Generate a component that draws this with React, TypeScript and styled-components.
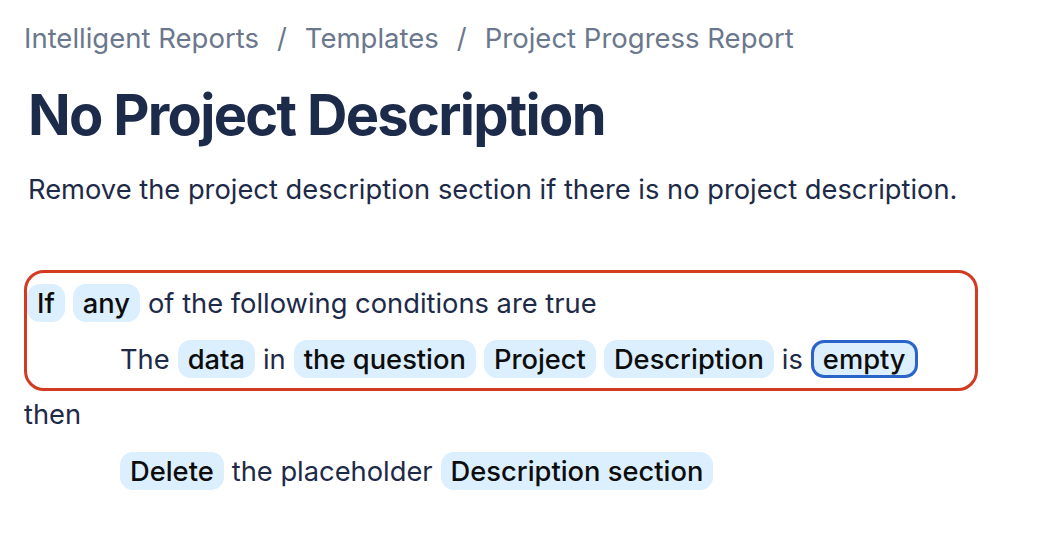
import React from 'react';
import styled, { createGlobalStyle } from 'styled-components';

const GlobalStyle = createGlobalStyle`
  html, body {
    margin: 0;
    padding: 0;
    background: #ffffff;
  }
  body {
    font-family: Inter, "Noto Sans", "Liberation Sans", sans-serif;
    color: #1d2a48;
  }
`;

const Page = styled.div`
  padding: 20px 24px 0 24px;
  width: 1042px;
  box-sizing: border-box;
`;

const Breadcrumbs = styled.nav`
  display: flex;
  align-items: center;
  gap: 18px;
  font-size: 27.5px;
  line-height: 36px;
  color: #6b778c;
`;

const Title = styled.h1`
  margin: 24px 0 0 4px;
  font-size: 56px;
  line-height: 70px;
  font-weight: 700;
  letter-spacing: -1.7px;
  color: #1c2b4a;
`;

const Description = styled.p`
  margin: 22px 0 0 4px;
  font-size: 27.3px;
  line-height: 36px;
  color: #1d2a48;
`;

const Rule = styled.div`
  margin-top: 62px;
  font-size: 27.3px;
`;

const ConditionBox = styled.div`
  width: 954px;
  box-sizing: border-box;
  border: 3px solid #d23a22;
  border-radius: 20px;
  padding: 11px 0 10px 0;
  display: flex;
  flex-direction: column;
  gap: 18px;
`;

const Line = styled.div<{ $indent?: boolean }>`
  display: flex;
  align-items: center;
  gap: 8px;
  height: 38px;
  padding-left: ${(p) => (p.$indent ? '93px' : '0')};
`;

const Word = styled.span`
  white-space: nowrap;
  color: #1d2a48;
`;

const Token = styled.span<{ $selected?: boolean }>`
  display: inline-flex;
  align-items: center;
  height: 38px;
  box-sizing: border-box;
  border-radius: 13px;
  background: #dcefff;
  color: #0d0d0d;
  font-weight: 500;
  white-space: nowrap;
  border: ${(p) => (p.$selected ? '3px solid #2a63c9' : 'none')};
  padding: ${(p) => (p.$selected ? '0 9px' : '0 10px')};
`;

const Then = styled.div`
  margin-top: 6px;
  height: 34px;
  display: flex;
  align-items: center;
`;

const ActionLine = styled(Line)`
  margin-top: 21px;
  padding-left: 96px;
`;

export default function App() {
  return (
    <>
      <GlobalStyle />
      <Page>
        <Breadcrumbs>
          <span>Intelligent Reports</span>
          <span>/</span>
          <span>Templates</span>
          <span>/</span>
          <span>Project Progress Report</span>
        </Breadcrumbs>
        <Title>No Project Description</Title>
        <Description>
          Remove the project description section if there is no project description.
        </Description>
        <Rule>
          <ConditionBox>
            <Line>
              <Token>If</Token>
              <Token>any</Token>
              <Word>of the following conditions are true</Word>
            </Line>
            <Line $indent>
              <Word>The</Word>
              <Token>data</Token>
              <Word>in</Word>
              <Token>the question</Token>
              <Token>Project</Token>
              <Token>Description</Token>
              <Word>is</Word>
              <Token $selected>empty</Token>
            </Line>
          </ConditionBox>
          <Then>then</Then>
          <ActionLine>
            <Token>Delete</Token>
            <Word>the placeholder</Word>
            <Token>Description section</Token>
          </ActionLine>
        </Rule>
      </Page>
    </>
  );
}
